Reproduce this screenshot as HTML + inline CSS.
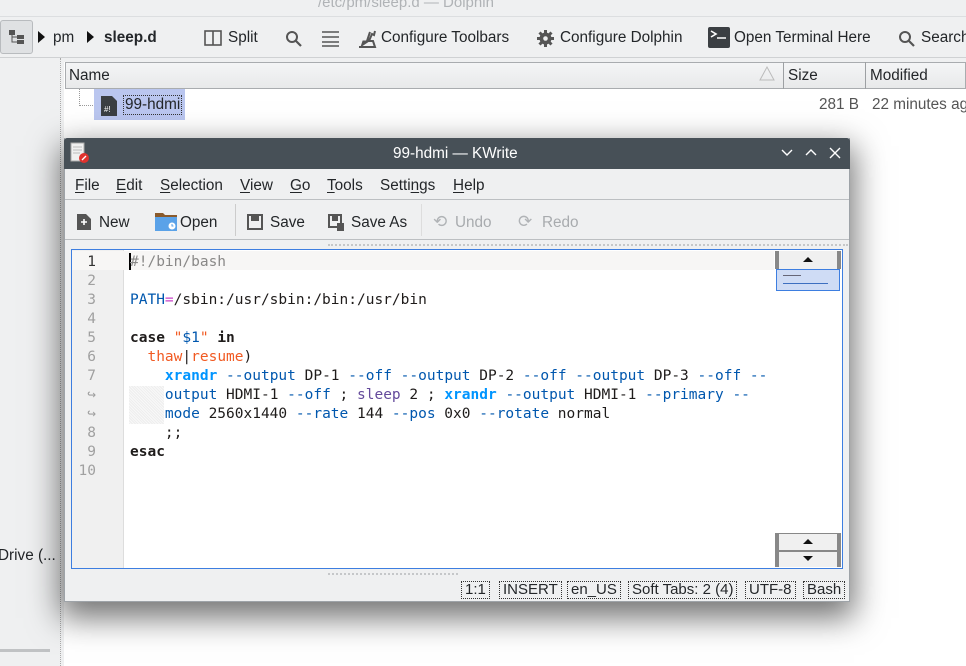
<!DOCTYPE html>
<html><head><meta charset="utf-8"><style>
*{margin:0;padding:0;box-sizing:border-box}
body{width:966px;height:666px;overflow:hidden;background:#eff0f1;font-family:"Liberation Sans","DejaVu Sans",sans-serif;font-size:14.5px;color:#232629;position:relative}
.abs{position:absolute}
.t{white-space:nowrap}
.code{font-family:"DejaVu Sans Mono","Liberation Mono",monospace;font-size:14.5px;white-space:pre;line-height:19px}
.kw{font-weight:bold;color:#1f1c1b}
.bl{color:#0057ae}
.bb{color:#0095ff;font-weight:bold}
.or{color:#f15a22}
.pu{color:#644a9b}
.pk{color:#c844c8}
.sb{border:1px dotted #333;padding:0 3px;height:18px;line-height:16px;font-size:15px}
.ui{font-size:15.3px}
u{text-decoration:underline;text-underline-offset:2px}
</style></head><body>
<div class="abs t" style="left:318px;top:-6px;color:#b0b3b6;font-size:15px">/etc/pm/sleep.d — Dolphin</div>
<div class="abs" style="left:0;top:16px;width:966px;height:1px;background:#dcdee0"></div>
<div class="abs" style="left:0;top:20px;width:33px;height:34px;border:1px solid #b8bbbe;border-radius:3px;background:#dfe1e3"></div>
<svg class="abs" style="left:8px;top:29px" width="18" height="16"><rect x="1" y="1" width="6" height="5" fill="#555"/><rect x="9" y="6" width="7" height="4" fill="#555"/><rect x="9" y="11" width="7" height="4" fill="#555"/><path d="M4 6v7h5M4 8h5" stroke="#555" fill="none"/></svg>
<div class="abs" style="left:38px;top:31px;width:0;height:0;border-left:7px solid #111;border-top:6px solid transparent;border-bottom:6px solid transparent"></div>
<div class="abs t ui" style="left:53px;top:29px">pm</div>
<div class="abs" style="left:87px;top:31px;width:0;height:0;border-left:7px solid #111;border-top:6px solid transparent;border-bottom:6px solid transparent"></div>
<div class="abs t ui" style="left:104px;top:29px;font-weight:bold">sleep.d</div>
<svg class="abs" style="left:204px;top:30px" width="18" height="16"><rect x="1" y="1" width="16" height="14" fill="none" stroke="#555" stroke-width="1.6"/><path d="M9 1v14" stroke="#555" stroke-width="1.6"/></svg>
<div class="abs t ui" style="left:228px;top:29px">Split</div>
<svg class="abs" style="left:285px;top:30px" width="18" height="18"><circle cx="7" cy="7" r="5" fill="none" stroke="#555" stroke-width="2"/><path d="M11 11l5 5" stroke="#555" stroke-width="2.2"/></svg>
<svg class="abs" style="left:322px;top:30px" width="18" height="17"><path d="M0 2h17M0 7h17M0 12h17M0 16h17" stroke="#555" stroke-width="1.6"/></svg>
<svg class="abs" style="left:357px;top:29px" width="20" height="20"><path d="M2 18h16l-2-6h-4l3-7 2 1 1-4M13 3l-3 9" stroke="#555" stroke-width="2" fill="none"/><path d="M4 18l2-6h7" fill="#555" stroke="#555"/></svg>
<div class="abs t ui" style="left:381px;top:29px">Configure Toolbars</div>
<svg class="abs" style="left:537px;top:30px" width="17" height="17"><path d="M8.5 0v17M0 8.5h17M2.5 2.5l12 12M14.5 2.5l-12 12" stroke="#555" stroke-width="3"/><circle cx="8.5" cy="8.5" r="6" fill="#555"/><circle cx="8.5" cy="8.5" r="2.3" fill="#eff0f1"/></svg>
<div class="abs t ui" style="left:560px;top:29px">Configure Dolphin</div>
<svg class="abs" style="left:708px;top:27px" width="22" height="21"><rect width="22" height="21" rx="2" fill="#3b3f43"/><path d="M3 4l5 3-5 3M9 11h9" stroke="#fff" stroke-width="1.6" fill="none"/></svg>
<div class="abs t ui" style="left:734px;top:29px">Open Terminal Here</div>
<svg class="abs" style="left:898px;top:30px" width="18" height="18"><circle cx="7" cy="7" r="5" fill="none" stroke="#555" stroke-width="2"/><path d="M11 11l5 5" stroke="#555" stroke-width="2.2"/></svg>
<div class="abs t ui" style="left:921px;top:29px">Search</div>
<div class="abs" style="left:0;top:57px;width:966px;height:1px;background:#cfd1d3"></div>
<div class="abs" style="left:60px;top:58px;width:3px;height:608px;border-left:1px dotted #aaa"></div>
<div class="abs t ui" style="left:-2px;top:547px">Drive (...</div>
<div class="abs" style="left:0;top:649px;width:50px;height:3px;background:#c0c2c4"></div>
<div class="abs" style="left:64px;top:62px;width:902px;height:604px;background:#fff"></div>
<div class="abs" style="left:65px;top:62px;width:901px;height:27px;background:linear-gradient(#f4f5f6,#e8e9ea);border:1px solid #a9acaf"></div>
<div class="abs t ui" style="left:69px;top:67px">Name</div>
<svg class="abs" style="left:759px;top:65px" width="16" height="16"><path d="M1 15L8 2l7 13z" fill="none" stroke="#bbb"/></svg>
<div class="abs" style="left:783px;top:62px;width:1px;height:27px;background:#9da0a3"></div>
<div class="abs t ui" style="left:788px;top:67px">Size</div>
<div class="abs" style="left:865px;top:62px;width:1px;height:27px;background:#9da0a3"></div>
<div class="abs t ui" style="left:870px;top:67px">Modified</div>
<div class="abs" style="left:79px;top:89px;width:14px;height:17px;border-left:1px dotted #999;border-bottom:1px dotted #999"></div>
<div class="abs" style="left:94px;top:89px;width:91px;height:31px;background:#bac6ef"></div>
<svg class="abs" style="left:101px;top:96px" width="16" height="20"><path d="M0 0h11l5 5v15H0z" fill="#3b3f43"/><text x="3" y="16" fill="#fff" font-size="8" font-family="Liberation Sans">#!</text></svg>
<div class="abs t ui" style="left:123px;top:95px;border:1px dotted #333;padding:0 1px;line-height:18px">99-hdmi</div>
<div class="abs t ui" style="left:819px;top:96px;color:#555">281 B</div>
<div class="abs t ui" style="left:872px;top:96px;color:#555">22 minutes ago</div>
<div class="abs" style="left:64px;top:138px;width:786px;height:464px;box-shadow:0 12px 30px 4px rgba(0,0,0,.55)"></div>
<div class="abs" style="left:64px;top:138px;width:786px;height:464px;background:#eff0f1;border:1px solid #9ea3a8;border-top:none"></div>
<div class="abs" style="left:64px;top:138px;width:786px;height:31px;background:#475057;border-radius:3px 3px 0 0"></div>
<svg class="abs" style="left:70px;top:142px" width="20" height="22"><path d="M1 1h13v18H1z" fill="#f0f0f0" stroke="#aaa"/><path d="M3 5h9M3 8h9M3 11h7" stroke="#bbb"/><circle cx="14" cy="16" r="5" fill="#e0322e"/><path d="M12 18l4-4" stroke="#fff" stroke-width="1.3"/></svg>
<div class="abs t ui" style="left:393px;top:145px;color:#fff">99-hdmi — KWrite</div>
<svg class="abs" style="left:780px;top:146px" width="64" height="14"><path d="M2 4l5 5 5-5M26 9l5-5 5 5M50 2l10 10M60 2L50 12" stroke="#fff" stroke-width="1.4" fill="none"/></svg>
<div class="abs t ui" style="left:75px;top:177px">
<span style="position:absolute;left:0"><u>F</u>ile</span><span style="position:absolute;left:41px"><u>E</u>dit</span><span style="position:absolute;left:85px"><u>S</u>election</span><span style="position:absolute;left:165px"><u>V</u>iew</span><span style="position:absolute;left:215px"><u>G</u>o</span><span style="position:absolute;left:252px"><u>T</u>ools</span><span style="position:absolute;left:305px">Setti<u>n</u>gs</span><span style="position:absolute;left:378px"><u>H</u>elp</span></div>
<div class="abs" style="left:65px;top:199px;width:784px;height:1px;background:#bcbfc2"></div>
<svg class="abs" style="left:77px;top:214px" width="14" height="16"><path d="M0 0h9l5 5v11H0z" fill="#555"/><path d="M4 8h6M7 5v6" stroke="#fff" stroke-width="1.6"/></svg>
<div class="abs t ui" style="left:99px;top:214px">New</div>
<svg class="abs" style="left:155px;top:211px" width="22" height="20"><path d="M0 2h8l2 2h12v16H0z" fill="#8a5a2b"/><rect y="6" width="22" height="14" fill="#5aa2e8"/><circle cx="17" cy="15" r="3.5" fill="#fff"/><path d="M17 13v2h1.5" stroke="#5aa2e8" fill="none"/></svg>
<div class="abs t ui" style="left:180px;top:214px">Open</div>
<div class="abs" style="left:235px;top:204px;width:1px;height:32px;background:#ccc"></div>
<svg class="abs" style="left:247px;top:214px" width="16" height="16"><rect x="1" y="1" width="14" height="14" fill="none" stroke="#555" stroke-width="2"/><rect x="4" y="2" width="8" height="5" fill="#555"/></svg>
<div class="abs t ui" style="left:270px;top:214px">Save</div>
<svg class="abs" style="left:328px;top:214px" width="16" height="17"><rect x="1" y="1" width="12" height="12" fill="none" stroke="#555" stroke-width="2"/><rect x="4" y="2" width="6" height="5" fill="#555"/><rect x="9" y="9" width="7" height="8" fill="#555"/></svg>
<div class="abs t ui" style="left:351px;top:214px">Save As</div>
<div class="abs" style="left:421px;top:204px;width:1px;height:32px;background:#ddd"></div>
<div class="abs t" style="left:433px;top:212px;font-size:17px;color:#b0b3b6">⟲</div>
<div class="abs t ui" style="left:455px;top:214px;color:#a8abae">Undo</div>
<div class="abs t" style="left:518px;top:212px;font-size:17px;color:#b0b3b6">⟳</div>
<div class="abs t ui" style="left:542px;top:214px;color:#a8abae">Redo</div>
<div class="abs" style="left:65px;top:239px;width:784px;height:1px;background:#bcbfc2"></div>
<div class="abs" style="left:328px;top:244px;width:520px;height:2px;border-top:2px dotted #c5c7c9"></div>
<div class="abs" style="left:71px;top:249px;width:772px;height:320px;background:#fff;border:1px solid #3d7ee0"></div>
<div class="abs" style="left:72px;top:250px;width:52px;height:318px;background:#f0f0f0;border-right:1px solid #ddd"></div>
<div class="abs" style="left:124px;top:251px;width:650px;height:19px;background:#f7f6f5"></div>
<div class="abs" style="left:72px;top:251px;width:52px;height:19px;background:#f7f6f5"></div>
<div class="abs code" style="left:72px;top:253px;width:50px;text-align:right;color:#a0a0a0;padding-right:26px"><span style="color:#333">1</span>
2
3
4
5
6
7
↪
↪
8
9
10</div>
<div class="abs" style="left:129px;top:386px;width:35px;height:38px;background:repeating-linear-gradient(45deg,#eee 0 1px,#f8f8f8 1px 2px)"></div>
<div class="abs" style="left:129px;top:253px;width:2px;height:17px;background:#000"></div>
<div class="abs code" style="left:130px;top:253px;color:#1f1c1b"><span style="color:#898887">#!/bin/bash</span>

<span class="bl">PATH</span><span class="pk">=</span>/sbin:/usr/sbin:/bin:/usr/bin

<span class="kw">case</span> <span class="or">"</span><span class="bl">$1</span><span class="or">"</span> <span class="kw">in</span>
  <span class="or">thaw</span>|<span class="or">resume</span>)
    <span class="bb">xrandr</span> <span class="bl">--output</span> DP-1 <span class="bl">--off</span> <span class="bl">--output</span> DP-2 <span class="bl">--off</span> <span class="bl">--output</span> DP-3 <span class="bl">--off</span> <span class="bl">--</span>
    <span class="bl">output</span> HDMI-1 <span class="bl">--off</span> ; <span class="pu">sleep</span> 2 ; <span class="bb">xrandr</span> <span class="bl">--output</span> HDMI-1 <span class="bl">--primary</span> <span class="bl">--</span>
    <span class="bl">mode</span> 2560x1440 <span class="bl">--rate</span> 144 <span class="bl">--pos</span> 0x0 <span class="bl">--rotate</span> normal
    ;;
<span class="kw">esac</span></div>
<div class="abs" style="left:775px;top:251px;width:66px;height:18px;background:#f0f0f0;border-left:4px solid #888;border-right:4px solid #888"></div>
<div class="abs" style="left:803px;top:257px;width:0;height:0;border-bottom:5px solid #111;border-left:5px solid transparent;border-right:5px solid transparent"></div>
<div class="abs" style="left:776px;top:269px;width:64px;height:22px;background:#cfdcf5;border:1px solid #3d7ee0"></div>
<div class="abs" style="left:783px;top:275px;width:18px;height:1px;background:#667"></div>
<div class="abs" style="left:783px;top:283px;width:45px;height:1px;background:#3d6fc0"></div>
<div class="abs" style="left:775px;top:533px;width:66px;height:17px;background:#f0f0f0;border-left:4px solid #888;border-right:4px solid #888;border-top:1px solid #888"></div>
<div class="abs" style="left:803px;top:539px;width:0;height:0;border-bottom:5px solid #111;border-left:5px solid transparent;border-right:5px solid transparent"></div>
<div class="abs" style="left:775px;top:550px;width:66px;height:17px;background:#f0f0f0;border-left:4px solid #888;border-right:4px solid #888;border-top:2px solid #888"></div>
<div class="abs" style="left:803px;top:556px;width:0;height:0;border-top:5px solid #111;border-left:5px solid transparent;border-right:5px solid transparent"></div>
<div class="abs" style="left:328px;top:573px;width:130px;height:2px;border-top:2px dotted #c5c7c9"></div>
<div class="abs sb t" style="left:461px;top:581px">1:1</div>
<div class="abs sb t" style="left:499px;top:581px">INSERT</div>
<div class="abs sb t" style="left:567px;top:581px">en_US</div>
<div class="abs sb t" style="left:628px;top:581px">Soft Tabs: 2 (4)</div>
<div class="abs sb t" style="left:745px;top:581px">UTF-8</div>
<div class="abs sb t" style="left:803px;top:581px">Bash</div>
</body></html>
